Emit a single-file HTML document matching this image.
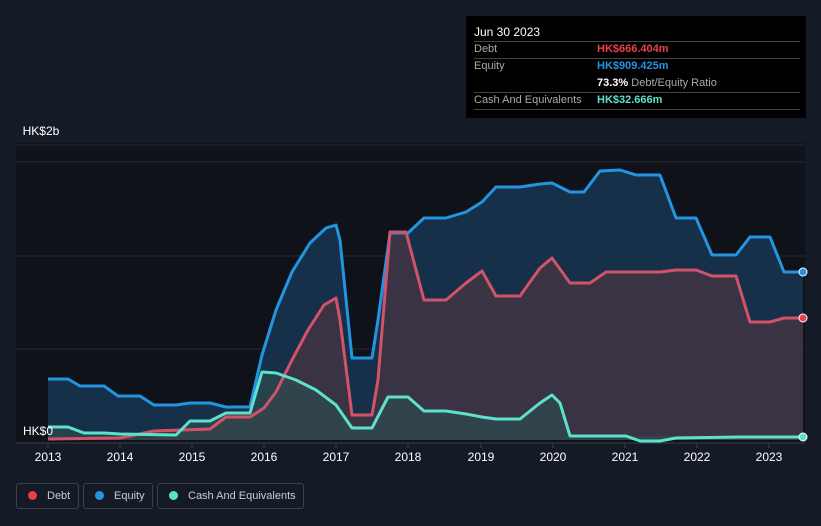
<!DOCTYPE html><html><head><style>
html,body{margin:0;width:821px;height:526px;overflow:hidden}
body{background:#151b26;font-family:"Liberation Sans",sans-serif;position:relative}
.tt{position:absolute;left:466px;top:16px;width:340px;height:102px;background:#000;color:#fff;font-size:11px}
.tt div{position:absolute;left:8px;right:6px;border-top:1px solid #444}
.tt span{white-space:nowrap}
.lg{position:absolute;top:483px;height:26px;border:1px solid #3a404c;border-radius:3px;color:#c8ccd2;font-size:11px;line-height:24px;box-sizing:border-box;white-space:nowrap}
.lg i{display:inline-block;width:9px;height:9px;border-radius:50%;margin:0 10px 0 11px;vertical-align:-1px}
</style></head><body>
<svg width="821" height="526" style="position:absolute;left:0;top:0">
<rect x="16" y="143" width="789" height="300" fill="#0f1219"/>
<g stroke="#262b35" stroke-width="1"><line x1="16" y1="145" x2="805" y2="145"/><line x1="16" y1="162" x2="805" y2="162"/><line x1="16" y1="256" x2="805" y2="256"/><line x1="16" y1="349" x2="805" y2="349"/></g>
<polygon fill="#16304a" points="48,440 48,379 68,379 80,386 104,386 118,396 140,396 154,405 176,405 190,403 210,403 226,407 250,407 262,355 276,310 292,272 310,243 326,228 336,225 340,240 352,358 372,358 378,320 390,233 408,233 424,218 446,218 466,212 482,202 496,187 520,187 540,184 552,183 570,192 584,192 600,171 620,170 636,175 660,175 676,218 696,218 712,255 736,255 750,237 770,237 784,272 803,272 803,440"/>
<polygon fill="#3a3343" points="48,440 48,439 120,438 154,431 210,429 226,417 250,417 264,408 276,392 292,360 308,330 324,305 336,298 340,320 352,415 372,415 378,380 390,232 406,232 424,300 446,300 466,283 482,271 496,296 520,296 540,268 552,258 570,283 590,283 606,272 660,272 676,270 696,270 712,276 736,276 750,322 770,322 784,318 803,318 803,440"/>
<polygon fill="#2d4a4e" opacity="0.7" points="48,440 48,427 68,427 84,433 104,433 120,434 176,435 190,421 210,421 226,413 250,413 262,372 276,373 296,380 316,390 336,405 352,428 372,428 388,397 408,397 424,411 446,411 466,414 482,417 496,419 520,419 540,403 552,395 560,403 570,436 803,436 803,440"/>
<g fill="none" stroke-width="3" stroke-linejoin="round">
<polyline stroke="#2394df" points="48,379 68,379 80,386 104,386 118,396 140,396 154,405 176,405 190,403 210,403 226,407 250,407 262,355 276,310 292,272 310,243 326,228 336,225 340,240 352,358 372,358 378,320 390,233 408,233 424,218 446,218 466,212 482,202 496,187 520,187 540,184 552,183 570,192 584,192 600,171 620,170 636,175 660,175 676,218 696,218 712,255 736,255 750,237 770,237 784,272 803,272"/>
<polyline stroke="#d0536a" points="48,439 120,438 154,431 210,429 226,417 250,417 264,408 276,392 292,360 308,330 324,305 336,298 340,320 352,415 372,415 378,380 390,232 406,232 424,300 446,300 466,283 482,271 496,296 520,296 540,268 552,258 570,283 590,283 606,272 660,272 676,270 696,270 712,276 736,276 750,322 770,322 784,318 803,318"/>
<polyline stroke="#5ce1cc" points="48,427 68,427 84,433 104,433 120,434 176,435 190,421 210,421 226,413 250,413 262,372 276,373 296,380 316,390 336,405 352,428 372,428 388,397 408,397 424,411 446,411 466,414 482,417 496,419 520,419 540,403 552,395 560,403 570,436 626,436 640,441 660,441 676,438 740,437 803,437"/>
</g>
<circle cx="803" cy="272" r="4" fill="#2394df" stroke="#fff" stroke-width="1"/>
<circle cx="803" cy="318" r="4" fill="#e8414c" stroke="#fff" stroke-width="1"/>
<circle cx="803" cy="437" r="4" fill="#5ce1cc" stroke="#fff" stroke-width="1"/>
<line x1="16" y1="443" x2="805" y2="443" stroke="#3a404c"/>
<g stroke="#3a404c">
<line x1="48" y1="443" x2="48" y2="448"/><line x1="120" y1="443" x2="120" y2="448"/><line x1="192" y1="443" x2="192" y2="448"/><line x1="264" y1="443" x2="264" y2="448"/><line x1="336" y1="443" x2="336" y2="448"/><line x1="408" y1="443" x2="408" y2="448"/><line x1="481" y1="443" x2="481" y2="448"/><line x1="553" y1="443" x2="553" y2="448"/><line x1="625" y1="443" x2="625" y2="448"/><line x1="697" y1="443" x2="697" y2="448"/><line x1="769" y1="443" x2="769" y2="448"/></g>
<g fill="#fff" font-size="12" text-anchor="middle" font-family="Liberation Sans">
<text x="48" y="461">2013</text><text x="120" y="461">2014</text><text x="192" y="461">2015</text><text x="264" y="461">2016</text><text x="336" y="461">2017</text><text x="408" y="461">2018</text><text x="481" y="461">2019</text><text x="553" y="461">2020</text><text x="625" y="461">2021</text><text x="697" y="461">2022</text><text x="769" y="461">2023</text>
<text x="41" y="135">HK$2b</text><text x="38" y="435">HK$0</text></g>
</svg>
<div class="tt">
<span style="position:absolute;left:8px;top:9px;font-size:12px">Jun 30 2023</span>
<div style="top:25px"></div><div style="top:42px"></div><div style="top:76px"></div><div style="top:93px"></div>
<span style="position:absolute;left:8px;top:27px;color:#aaa">Debt</span><span style="position:absolute;left:131px;top:27px;color:#e8414c;font-weight:bold">HK$666.404m</span>
<span style="position:absolute;left:8px;top:44px;color:#aaa">Equity</span><span style="position:absolute;left:131px;top:44px;color:#2394df;font-weight:bold">HK$909.425m</span>
<span style="position:absolute;left:131px;top:61px;color:#aaa"><b style="color:#fff">73.3%</b> Debt/Equity Ratio</span>
<span style="position:absolute;left:8px;top:78px;color:#aaa">Cash And Equivalents</span><span style="position:absolute;left:131px;top:78px;color:#5ce1cc;font-weight:bold">HK$32.666m</span>
</div>
<div class="lg" style="left:16px;width:63px"><i style="background:#e8414c"></i>Debt</div>
<div class="lg" style="left:83px;width:70px"><i style="background:#2394df"></i>Equity</div>
<div class="lg" style="left:157px;width:147px"><i style="background:#5ce1cc"></i>Cash And Equivalents</div>
</body></html>
